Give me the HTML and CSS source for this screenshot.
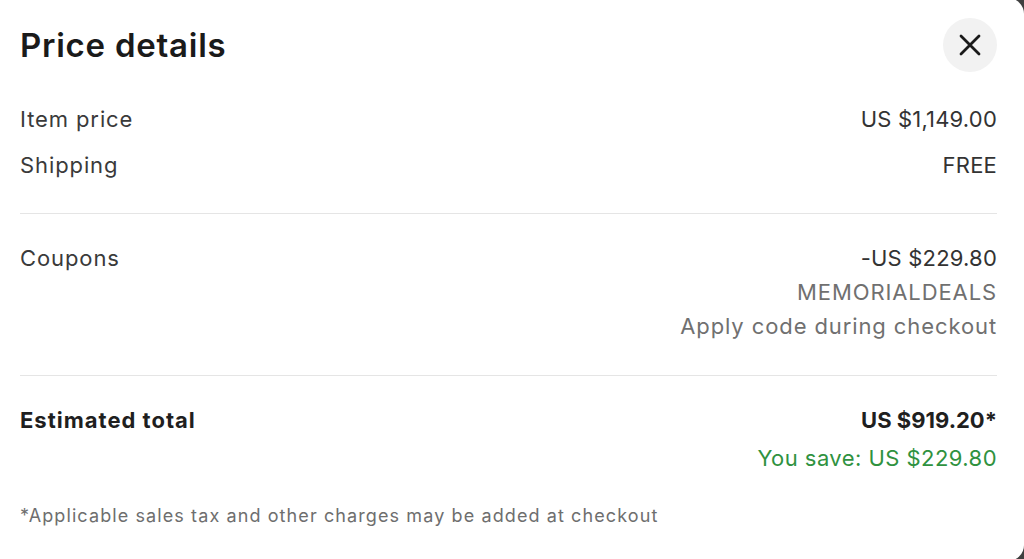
FILE: index.html
```html
<!DOCTYPE html>
<html lang="en">
<head>
<meta charset="utf-8">
<title>Price details</title>
<link rel="stylesheet" href="styles.css">
</head>
<body>
<div class="modal">
  <header class="head">
    <h2 class="title">Price details</h2>
    <button class="close" aria-label="Close">
      <svg width="22" height="22" viewBox="0 0 22 22" aria-hidden="true">
        <path d="M2 2 L20 20 M20 2 L2 20" stroke="#1a1a1a" stroke-width="2.8" stroke-linecap="round" fill="none"/>
      </svg>
    </button>
  </header>

  <section class="group basics">
    <div class="row"><span class="label">Item price</span><span class="value">US $1,149.00</span></div>
    <div class="row"><span class="label">Shipping</span><span class="value">FREE</span></div>
  </section>

  <hr class="sep sep-first">

  <section class="group coupons">
    <div class="row">
      <span class="label">Coupons</span>
      <div class="stack">
        <span class="value">-US $229.80</span>
        <span class="muted">MEMORIALDEALS</span>
        <span class="muted">Apply code during checkout</span>
      </div>
    </div>
  </section>

  <hr class="sep sep-second">

  <section class="group total">
    <div class="row">
      <span class="label strong">Estimated total</span>
      <div class="stack">
        <span class="value strong">US $919.20*</span>
        <span class="save">You save: US $229.80</span>
      </div>
    </div>
  </section>

  <p class="note">*Applicable sales tax and other charges may be added at checkout</p>
</div>
</body>
</html>
```

FILE: styles.css
```css
html, body {
  margin: 0;
  padding: 0;
}

body {
  background: #3f3f3f;
  font-family: Inter, "Noto Sans", "Liberation Sans", sans-serif;
  color: #333333;
  overflow: hidden;
}

.modal {
  background: #ffffff;
  margin-top: -2px;
  height: 563px;
  border-radius: 0 16px 16px 0;
  padding: 20px 27px 0 20px;
  box-sizing: border-box;
}

.head {
  display: flex;
  align-items: center;
  justify-content: space-between;
  height: 54px;
}

.title {
  margin: 0;
  font-size: 33px;
  font-weight: 600;
  color: #1a1a1a;
  letter-spacing: 0.75px;
}

.close {
  width: 54px;
  height: 54px;
  border-radius: 50%;
  border: none;
  background: #f2f2f2;
  display: flex;
  align-items: center;
  justify-content: center;
  padding: 0;
}

.group {
  display: flex;
  flex-direction: column;
}

.basics {
  margin-top: 24px;
}

.row {
  display: flex;
  justify-content: space-between;
  align-items: flex-start;
  font-size: 22px;
}

.basics .row {
  line-height: 46px;
}

.label {
  color: #3a3a3a;
  letter-spacing: 0.9px;
}

.value {
  color: #333333;
  letter-spacing: 0.2px;
}

.stack {
  display: flex;
  flex-direction: column;
  align-items: flex-end;
}

.coupons .row {
  line-height: 34px;
}

.muted {
  color: #707070;
  letter-spacing: 0.9px;
}

.sep {
  border: none;
  border-top: 1px solid #e5e5e5;
  margin: 0;
}

.sep-first {
  margin-top: 25px;
}

.coupons {
  margin-top: 27px;
}

.sep-second {
  margin-top: 32px;
}

.total {
  margin-top: 25px;
}

.total .row {
  line-height: 38px;
}

.label.strong {
  font-weight: 700;
  color: #1f1f1f;
  letter-spacing: 1px;
}

.value.strong {
  font-weight: 700;
  color: #1f1f1f;
  letter-spacing: 0;
}

.save {
  color: #2f9240;
  letter-spacing: 0.45px;
}

.note {
  margin: 27px 0 0;
  font-size: 18px;
  line-height: 24px;
  color: #6e6e6e;
  letter-spacing: 1.1px;
}
```
